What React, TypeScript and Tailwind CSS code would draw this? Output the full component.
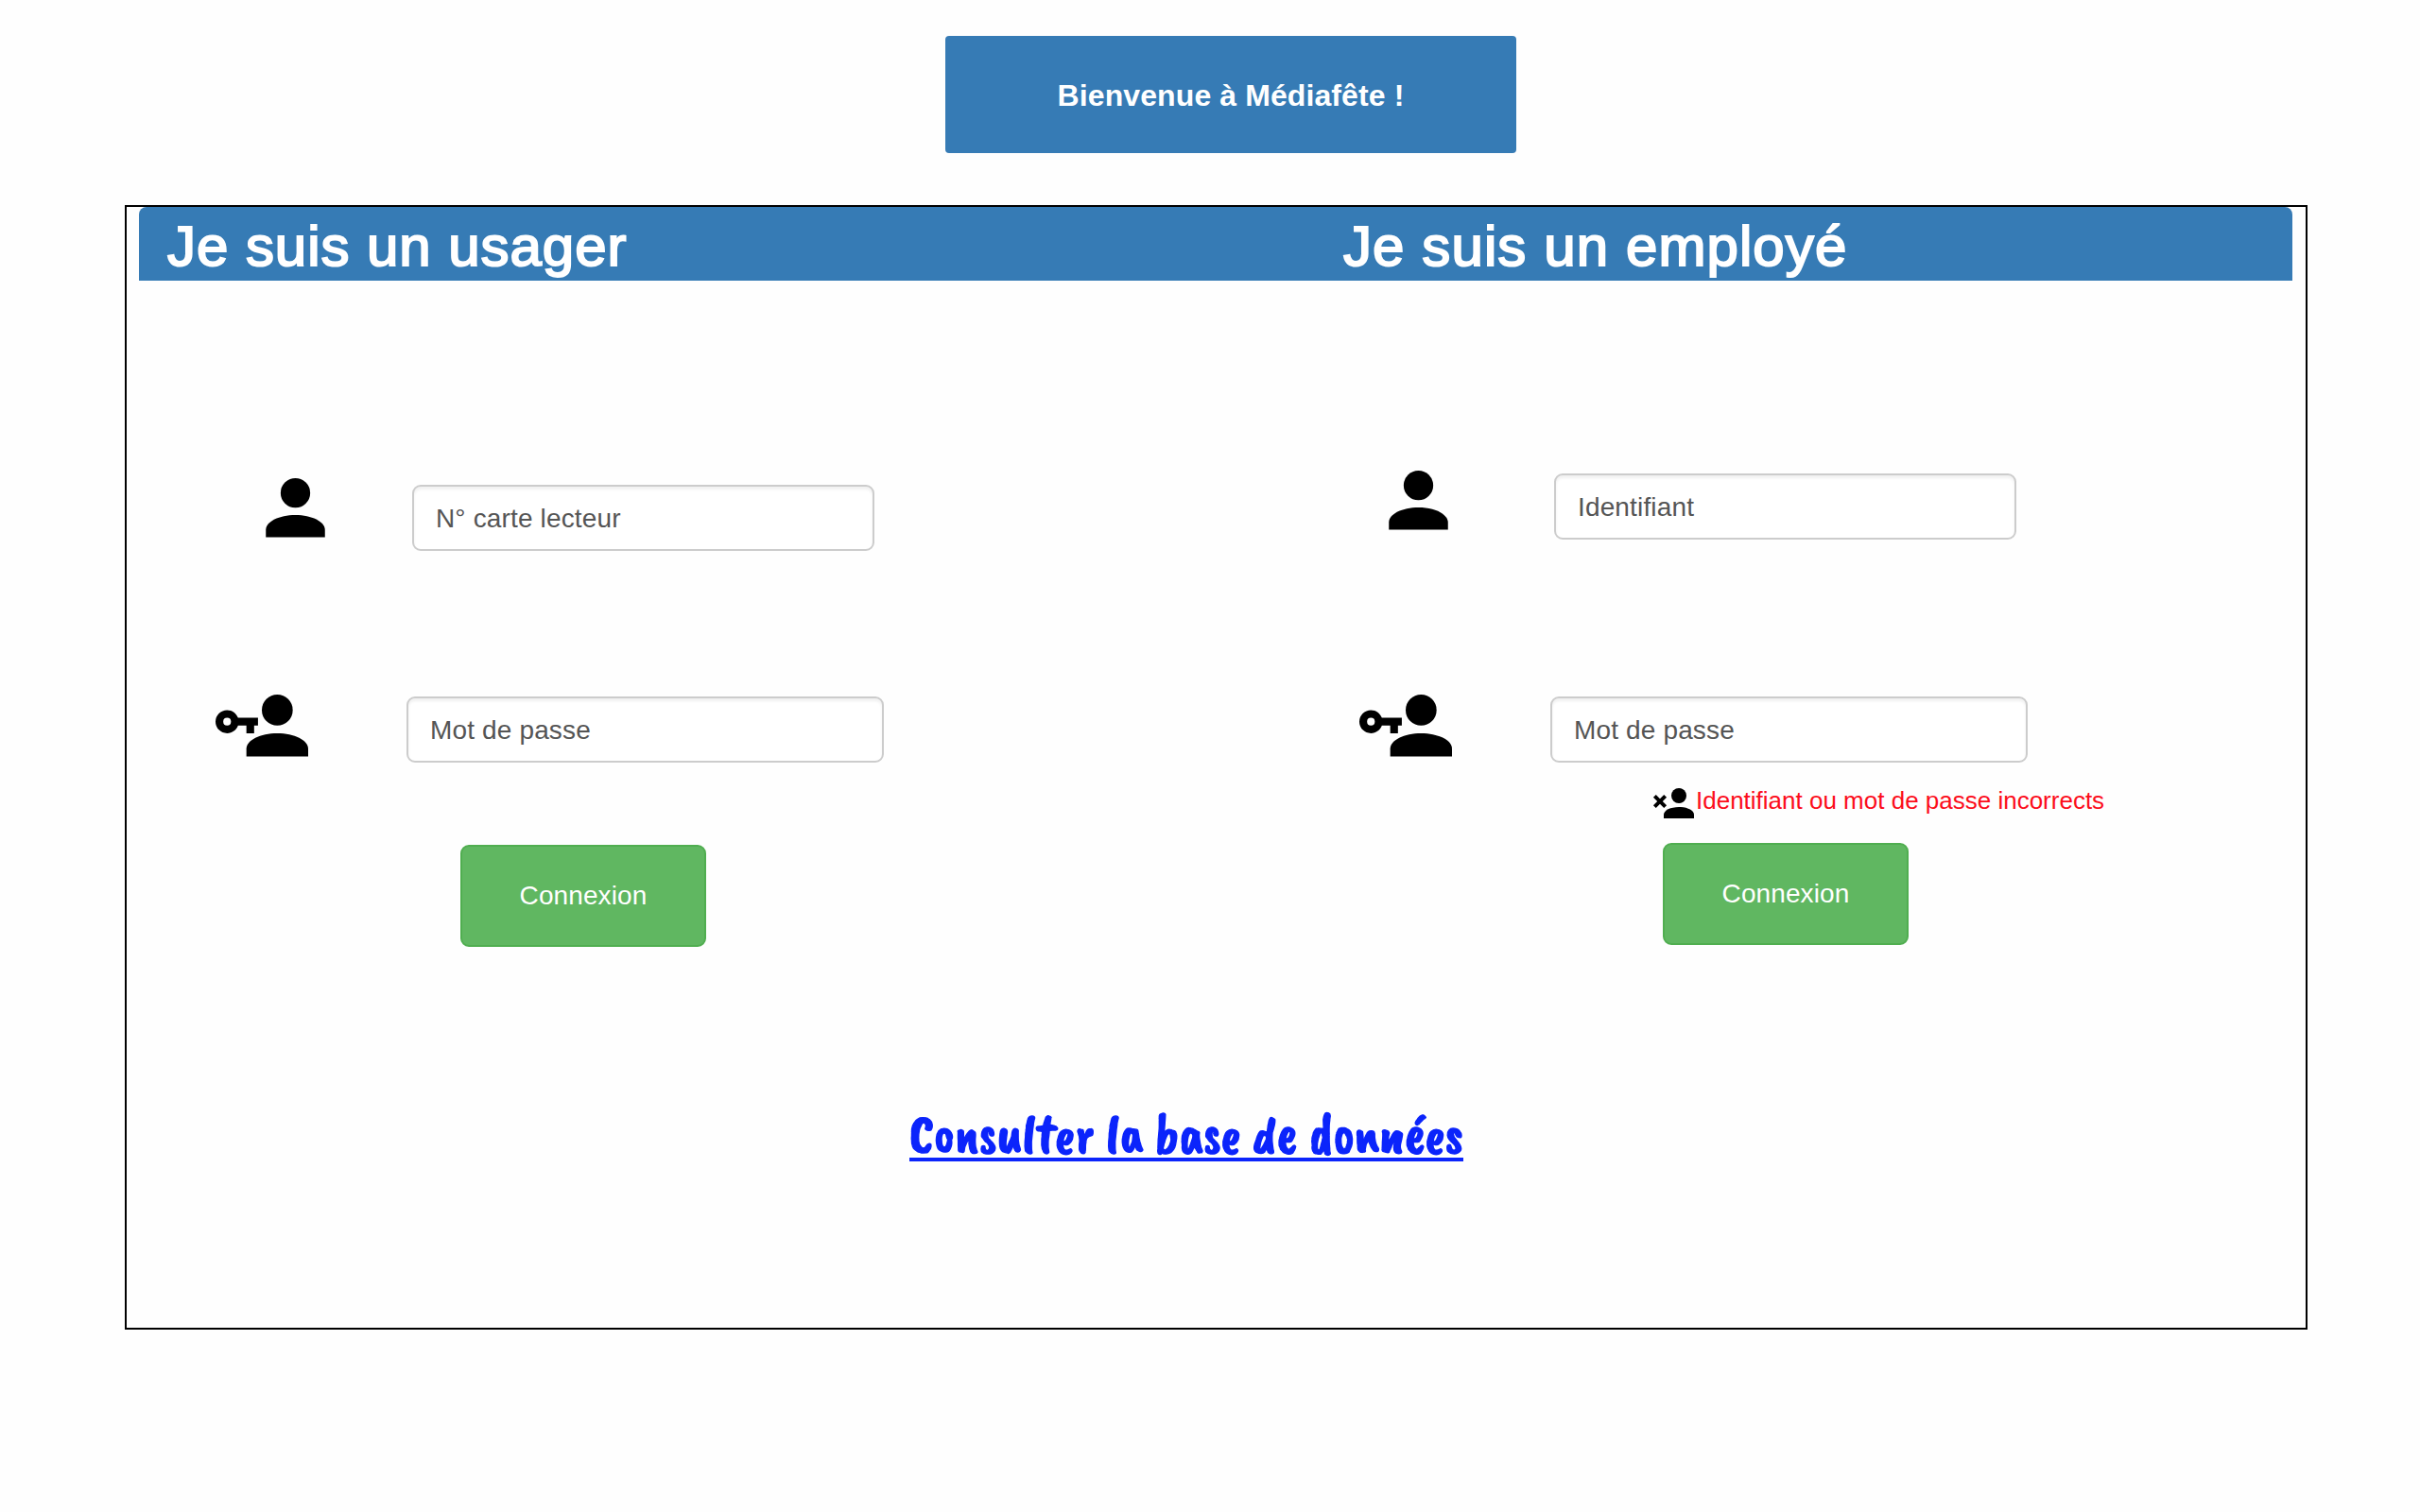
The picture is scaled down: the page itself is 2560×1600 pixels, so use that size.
import React from "react";

function PersonIcon({ className }: { className: string }) {
  return (
    <svg viewBox="4 4 16 16" fill="#000" className={className}>
      <circle cx="12" cy="8" r="4" />
      <path d="M12 14c4.42 0 8 1.79 8 4v2H4v-2c0-2.21 3.58-4 8-4Z" />
    </svg>
  );
}

function PersonKeyIcon({ className }: { className: string }) {
  return (
    <svg viewBox="0 4 24 16" fill="#000" className={className}>
      <path d="M11 10v2h-1v2H8v-2H5.83C5.42 13.17 4.31 14 3 14a3 3 0 0 1 0-6c1.31 0 2.42.83 2.83 2H11M3 10a1 1 0 0 0 0 2 1 1 0 0 0 0-2" />
      <circle cx="16" cy="8" r="4" />
      <path d="M16 14c4.42 0 8 1.79 8 4v2H8v-2c0-2.21 3.58-4 8-4Z" />
    </svg>
  );
}

function PersonRemoveIcon({ className }: { className: string }) {
  return (
    <svg viewBox="1 4 22 16" fill="#000" className={className}>
      <circle cx="15" cy="8" r="4" />
      <path d="M15 14c4.42 0 8 1.79 8 4v2H7v-2c0-2.21 3.58-4 8-4Z" />
      <path d="M5 9.59 7.12 7.46l1.42 1.42L6.41 11l2.13 2.12-1.42 1.42L5 12.41l-2.12 2.13-1.42-1.42L3.59 11 1.46 8.88l1.42-1.42L5 9.59Z" />
    </svg>
  );
}

function Field({ className, children }: { className: string; children: React.ReactNode }) {
  return (
    <div
      role="textbox"
      className={
        "flex h-[70px] shrink-0 items-center rounded-[9px] border-2 border-[#cccccc] bg-white pt-[2px] pl-[23px] text-[28px] leading-none tracking-[0.15px] text-[#555555] shadow-[inset_0_3px_3px_rgba(0,0,0,0.06)] " +
        className
      }
    >
      {children}
    </div>
  );
}

function Submit({ className }: { className: string }) {
  return (
    <button
      className={
        "flex h-[108px] w-[260px] items-center justify-center rounded-[9px] border-2 border-[#50ae50] bg-[#60b761] text-[28px] leading-none tracking-[0.1px] text-white " +
        className
      }
    >
      Connexion
    </button>
  );
}

export default function App() {
  return (
    <main className="h-[1600px] w-[2560px] overflow-hidden bg-[#fefefe] pt-[38px] font-['Liberation_Sans',Arial,sans-serif]">
      <header className="ml-[1000px] flex h-[124px] w-[604px] items-center justify-center rounded-[4px] bg-[#367bb5] pt-px text-[32px] font-bold leading-none tracking-[0.1px] text-white">
        Bienvenue à Médiafête !
      </header>

      <section className="mt-[55px] ml-[132px] h-[1190px] w-[2309px] border-2 border-black">
        <div className="ml-[13px] grid h-[78px] w-[2278px] grid-cols-[1244px_1fr] items-center rounded-t-[8px] bg-[#367bb5] pt-[5px] pl-[30px] text-[60px] leading-none text-white [-webkit-text-stroke:2px_white]">
          <h1 className="tracking-[0.95px]">Je suis un usager</h1>
          <h1 className="tracking-[1.1px]">Je suis un employé</h1>
        </div>

        <div className="grid h-[820px] grid-cols-[1210px_1fr]">
          <form className="flex flex-col">
            <div className="mt-[209px] flex h-[77px] items-start pl-[147px]">
              <PersonIcon className="h-[62.5px] w-[63px]" />
              <Field className="mt-[7px] ml-[92px] w-[489px]">N° carte lecteur</Field>
            </div>
            <div className="mt-[152px] flex h-[72px] items-start pl-[94px]">
              <PersonKeyIcon className="h-[65.5px] w-[98px]" />
              <Field className="mt-[2px] ml-[104px] w-[505px]">Mot de passe</Field>
            </div>
            <Submit className="mt-[87px] ml-[353px]" />
          </form>

          <form className="flex flex-col">
            <div className="mt-[201px] flex h-[73px] items-start pl-[125px]">
              <PersonIcon className="h-[62.5px] w-[63px]" />
              <Field className="mt-[3px] ml-[112px] w-[489px]">Identifiant</Field>
            </div>
            <div className="mt-[164px] flex h-[72px] items-start pl-[94px]">
              <PersonKeyIcon className="h-[65.5px] w-[98px]" />
              <Field className="mt-[2px] ml-[104px] w-[505px]">Mot de passe</Field>
            </div>
            <div className="mt-[27px] flex h-8 items-start pl-[404px]">
              <PersonRemoveIcon className="h-8 w-11" />
              <span className="ml-[2px] text-[26px] leading-[27px] whitespace-nowrap text-[#fc0d1b]">
                Identifiant ou mot de passe incorrects
              </span>
            </div>
            <Submit className="mt-[26px] ml-[415px]" />
          </form>
        </div>

        <a
          href="#"
          className="mt-[48px] ml-[828px] block h-[64px] w-[586px] border-b-4 border-[#0b24fb] font-['Caveat_Brush',cursive] text-[58px] leading-[70px] whitespace-nowrap text-[#0b24fb] [-webkit-text-stroke:1.4px_#0b24fb]"
        >
          Consulter la base de données
        </a>
      </section>
    </main>
  );
}
